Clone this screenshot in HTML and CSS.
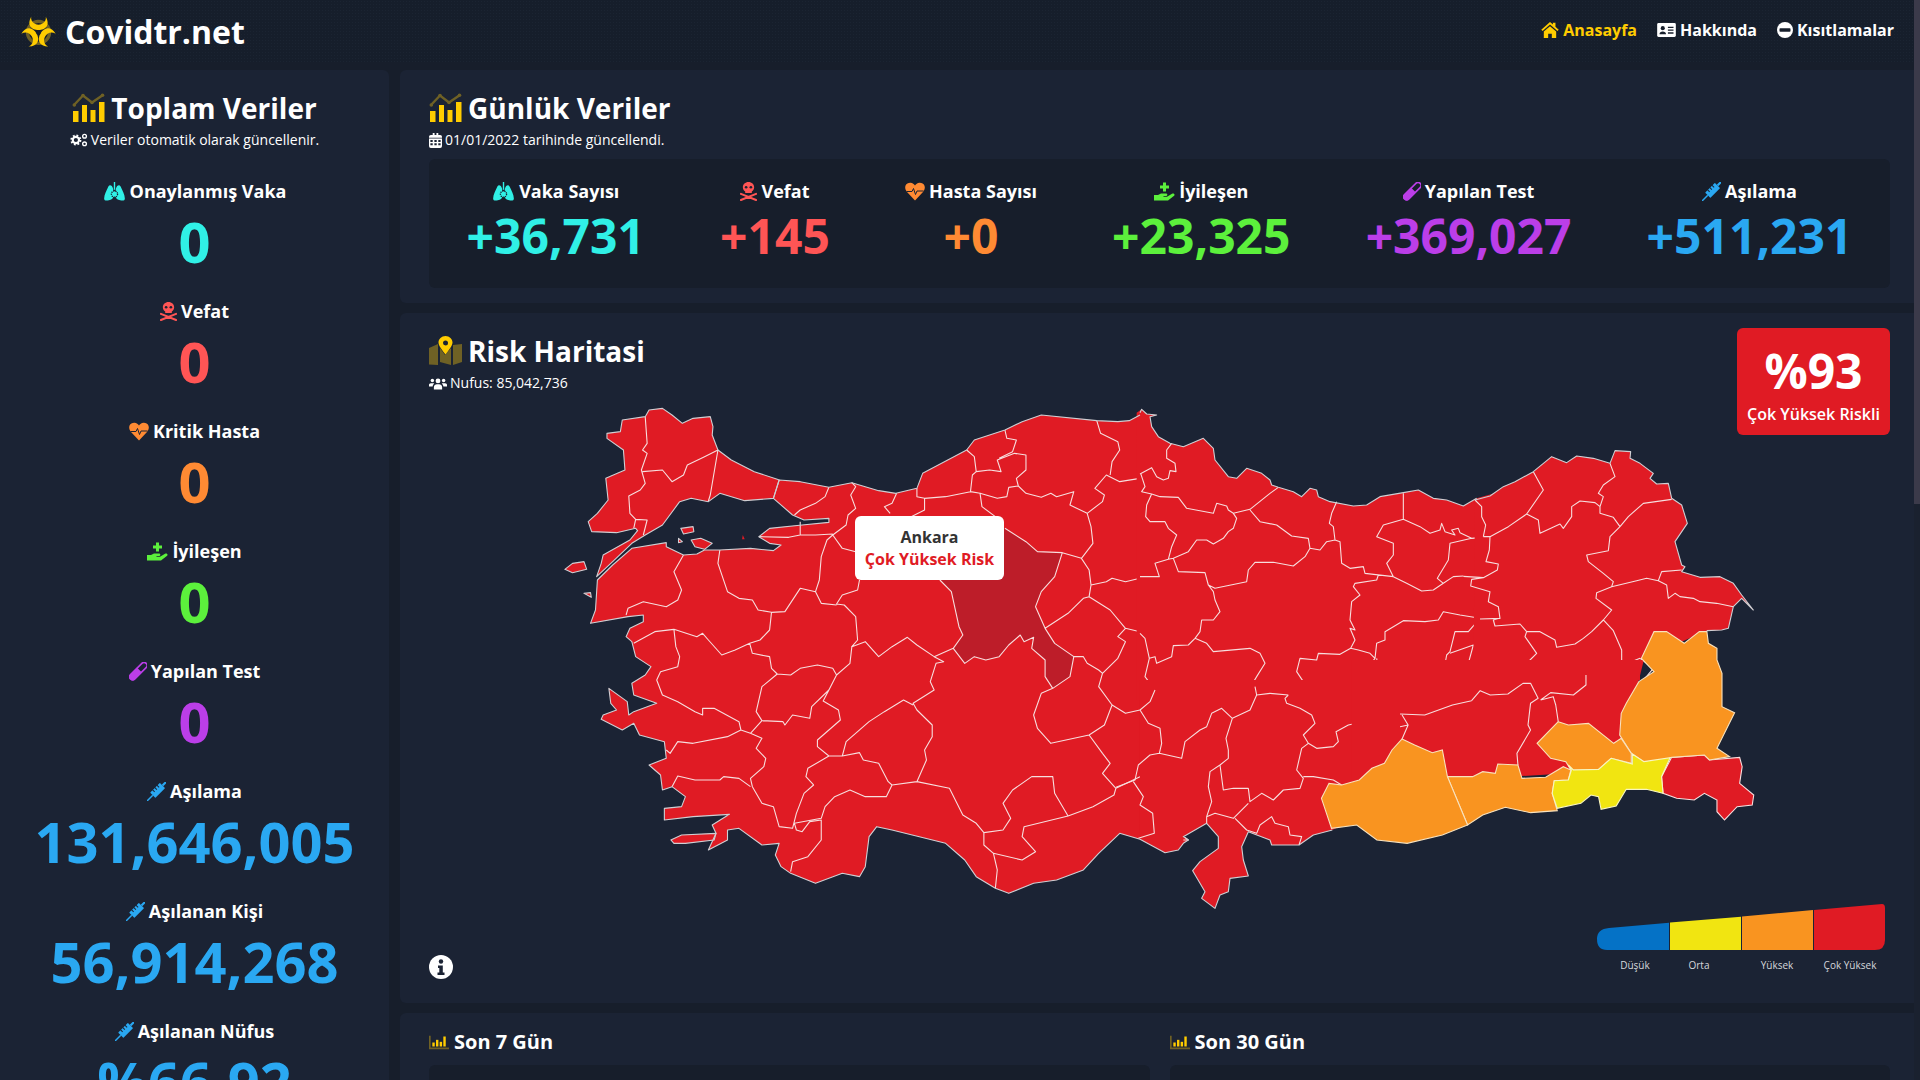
FILE: index.html
```html
<!DOCTYPE html>
<html lang="tr">
<head>
    <meta charset="UTF-8">
    <meta name="viewport" content="width=device-width, initial-scale=1.0">
    <title>Covidtr.net</title>
    <link rel="stylesheet" href="styles.css">
</head>
<body>
    <svg class="icon-defs" aria-hidden="true">
        <symbol id="i-chart" viewBox="0 0 32 29">
            <polyline points="1.5,12 10.5,2.5 19.5,9.5 30.5,2" fill="none" stroke="#6f6125" stroke-width="2.4"/>
            <circle cx="1.8" cy="12" r="1.8" fill="#6f6125"/><circle cx="10.5" cy="2.5" r="1.8" fill="#6f6125"/><circle cx="19.5" cy="9.5" r="1.8" fill="#6f6125"/><circle cx="30" cy="2.2" r="1.8" fill="#6f6125"/>
            <rect x="0.5" y="18" width="5.5" height="11" fill="#ffcc00"/><rect x="9.5" y="12" width="5" height="17" fill="#ffcc00"/><rect x="18" y="17" width="5" height="12" fill="#ffcc00"/><rect x="26.5" y="9" width="5.5" height="20" fill="#ffcc00"/>
        </symbol>
        <symbol id="i-bars" viewBox="0 0 30 20">
            <path d="M0 0h2.5v17.5H30V20H0z" fill="#6f6125"/>
            <rect x="5" y="10" width="3.6" height="6" fill="#ffcc00"/><rect x="10.5" y="6" width="3.6" height="10" fill="#ffcc00"/><rect x="16" y="9" width="3.6" height="7" fill="#ffcc00"/><rect x="21.5" y="1" width="3.6" height="15" fill="#ffcc00"/>
        </symbol>
        <symbol id="i-map" viewBox="0 0 33 29">
            <path d="M0 12l9-4v21l-9 -0.5zM11 12l5 7 6-7v17l-11-3zM24 9l9 -1v18l-9 3z" fill="#6f6125"/>
            <path d="M16.5 0c-4 0-7 3-7 6.5 0 3.500 4 8 7 12 3-4 7-8.500 7-12 0-3.500-3-6.500-7-6.500zm0 4.500a2.500 2.500 0 1 1 0 5 2.500 2.500 0 0 1 0-5z" fill="#ffcc00" fill-rule="evenodd"/>
        </symbol>
        <symbol id="i-bio" viewBox="-20 -18 40 36">
            <circle cx="0" cy="1" r="12" fill="none" stroke="#6f6125" stroke-width="3.600"/>
            <g fill="#ffcc00">
                <path d="M-8-17C-13-8-8-2.500 0-2.500 8-2.500 13-8 8-17 8.500-12 5-8.500 0-8.500-5-8.500-8.500-12-8-17z" transform="translate(0 1)"/>
                <path d="M-8-17C-13-8-8-2.500 0-2.500 8-2.500 13-8 8-17 8.500-12 5-8.500 0-8.500-5-8.500-8.500-12-8-17z" transform="translate(0 1) rotate(120)"/>
                <path d="M-8-17C-13-8-8-2.500 0-2.500 8-2.500 13-8 8-17 8.500-12 5-8.500 0-8.500-5-8.500-8.500-12-8-17z" transform="translate(0 1) rotate(240)"/>
            </g>
            <circle cx="0" cy="1" r="2.600" fill="#161e2b"/>
        </symbol>
        <symbol id="i-gears" viewBox="0 0 26 20">
            <circle cx="8.500" cy="10" r="6.500" fill="none" stroke="currentColor" stroke-width="3" stroke-dasharray="2.600 2.500"/>
            <circle cx="8.500" cy="10" r="4.500" fill="none" stroke="currentColor" stroke-width="3"/>
            <circle cx="21" cy="4.500" r="2.700" fill="none" stroke="currentColor" stroke-width="2"/>
            <circle cx="21" cy="15.500" r="2.700" fill="none" stroke="currentColor" stroke-width="2"/>
        </symbol>
        <symbol id="i-cal" viewBox="0 0 14 16">
            <path d="M2 2h2V0h2v2h2V0h2v2h2a2 2 0 0 1 2 2v10a2 2 0 0 1-2 2H2a2 2 0 0 1-2-2V4a2 2 0 0 1 2-2z" fill="currentColor"/>
            <path d="M0 5h14v.8H0zM1.500 7.500h2.500v2H1.500zM5.800 7.500h2.500v2H5.800zM10 7.500h2.500v2H10zM1.500 11h2.500v2H1.500zM5.800 11h2.500v2H5.800zM10 11h2.500v2H10z" fill="#1b2334"/>
        </symbol>
        <symbol id="i-users" viewBox="0 0 24 16">
            <circle cx="12" cy="4.500" r="3.200" fill="currentColor"/><circle cx="4.500" cy="4" r="2.300" fill="currentColor"/><circle cx="19.500" cy="4" r="2.300" fill="currentColor"/>
            <path d="M6.500 16v-3c0-2.500 2-4 4-4h3c2 0 4 1.500 4 4v3zM0 10c0-1.500 1-2.500 2.500-2.500h3c.6 0 1 .2 1.500.5-1.200 1-2 2.500-2.200 4H0zM24 10c0-1.500-1-2.500-2.500-2.500h-3c-.6 0-1 .2-1.500.5 1.200 1 2 2.500 2.200 4H24z" fill="currentColor"/>
        </symbol>
        <symbol id="i-lungs" viewBox="0 0 24 22">
            <path d="M10.500 8C9 3 6 3 4.800 5.500 3 9.500 0 15 0 19c0 2.500 2.500 3 5.500 2 3-.8 5-1.500 5-4zM13.500 8C15 3 18 3 19.200 5.500 21 9.500 24 15 24 19c0 2.500-2.500 3-5.500 2-3-.8-5-1.500-5-4z" fill="currentColor"/>
            <rect x="11.200" y="0" width="1.600" height="9" fill="currentColor"/>
            <circle cx="12" cy="14" r="3.600" fill="currentColor" stroke="#1b2334" stroke-width="1.500" stroke-dasharray="1.500 1"/>
        </symbol>
        <symbol id="i-skull" viewBox="0 0 18 20">
            <path d="M9 0c-3.500 0-6 2.500-6 5.500 0 2 1 3.500 2.500 4.500v1.500h7V10c1.500-1 2.500-2.500 2.500-4.500C15 2.500 12.500 0 9 0z" fill="currentColor"/>
            <circle cx="6.500" cy="5.500" r="1.400" fill="#1b2334"/><circle cx="11.500" cy="5.500" r="1.400" fill="#1b2334"/>
            <path d="M1 12.500l16 6.500M17 12.500L1 19" stroke="currentColor" stroke-width="2.200" stroke-linecap="round"/>
        </symbol>
        <symbol id="i-heart" viewBox="0 0 20 18">
            <path d="M10 18L2 9.500C-1 6-0.500 0.500 5 0.200 7.500 0 9 1.500 10 3c1-1.500 2.500-3 5-2.800 5.500.3 6 5.800 3 9.300z" fill="currentColor"/>
            <polyline points="1.500,9 7,9 8.500,6 10.500,12 12,8.500 18.500,8.500" fill="none" stroke="#1b2334" stroke-width="1"/>
        </symbol>
        <symbol id="i-hand" viewBox="0 0 21 18">
            <path d="M9 0h3v3h3v3h-3v3H9V6H6V3h3z" fill="currentColor"/>
            <path d="M0 12.500h4L7 11h5c1.800 0 1.800 2.500 0 2.500H9.500v.7H13l5-3c2-1 3.500 1 1.800 2.300L14 18H0z" fill="currentColor"/>
        </symbol>
        <symbol id="i-vial" viewBox="0 0 18 18">
            <g transform="rotate(45 9 9)">
                <rect x="6" y="-2.500" width="6" height="22" rx="3" fill="none" stroke="currentColor" stroke-width="1.600"/>
                <path d="M5.500 7h7v9.500a3.500 3.500 0 0 1-7 0z" fill="currentColor"/>
            </g>
        </symbol>
        <symbol id="i-syringe" viewBox="0 0 18 18">
            <g transform="rotate(45 9 9)" fill="currentColor">
                <rect x="5.500" y="1" width="7" height="13" rx="0.500"/>
                <rect x="8.300" y="14" width="1.400" height="8"/>
                <rect x="8" y="-4" width="2" height="5"/>
                <rect x="5.500" y="-4.500" width="7" height="1.600"/>
                <path d="M5 4h3v1H5zM5 7h3v1H5zM5 10h3v1H5z" fill="#1b2334"/>
            </g>
        </symbol>
    </svg>

    <div class="page">
        <div class="content">
            <header class="navbar">
                <a class="brand">
                    <svg class="bio-icon"><use href="#i-bio"/></svg>
                    <span>Covidtr.net</span>
                </a>
                <nav class="nav-links">
                    <a class="nav-link active">
                        <svg class="nav-icon-home" viewBox="0 0 24 22"><path fill="currentColor" d="M12 0L0 10.500l1.800 2L12 3.600l10.200 8.900 1.800-2L19.500 6.500V1h-3.500v2.500zM3.500 13L12 5.800l8.500 7.200V22H14.500v-6h-5v6h-6z"/></svg>
                        Anasayfa
                    </a>
                    <a class="nav-link">
                        <svg class="nav-icon-id" viewBox="0 0 20 15"><rect width="20" height="15" rx="1.500" fill="currentColor"/><circle cx="6" cy="5.500" r="2.200" fill="#161e2b"/><path d="M2.500 12c0-2 1.500-3 3.500-3s3.500 1 3.500 3zM11.500 4h6v1.400h-6zM11.500 7h6v1.400h-6zM11.500 10h6v1.400h-6z" fill="#161e2b"/></svg>
                        Hakkında
                    </a>
                    <a class="nav-link">
                        <svg class="nav-icon-ban" viewBox="0 0 16 16"><circle cx="8" cy="8" r="8" fill="currentColor"/><rect x="2.500" y="6.200" width="11" height="3.600" rx="0.800" fill="#161e2b"/></svg>
                        Kısıtlamalar
                    </a>
                </nav>
            </header>

            <div class="layout">
                <aside class="sidebar">
                    <h2 class="card-title center"><svg class="title-icon"><use href="#i-chart"/></svg>Toplam Veriler</h2>
                    <p class="card-sub center"><svg class="sub-icon-gears"><use href="#i-gears"/></svg>Veriler otomatik olarak güncellenir.</p>

                    <div class="totals">
                        <div class="total">
                            <div class="stat-label"><svg class="w-lungs c-cyan"><use href="#i-lungs"/></svg>Onaylanmış Vaka</div>
                            <div class="total-num c-cyan">0</div>
                        </div>
                        <div class="total">
                            <div class="stat-label"><svg class="w-skull c-red"><use href="#i-skull"/></svg>Vefat</div>
                            <div class="total-num c-red">0</div>
                        </div>
                        <div class="total">
                            <div class="stat-label"><svg class="w-heart c-orange"><use href="#i-heart"/></svg>Kritik Hasta</div>
                            <div class="total-num c-orange">0</div>
                        </div>
                        <div class="total">
                            <div class="stat-label"><svg class="w-hand c-green"><use href="#i-hand"/></svg>İyileşen</div>
                            <div class="total-num c-green">0</div>
                        </div>
                        <div class="total">
                            <div class="stat-label"><svg class="w-vial c-purple"><use href="#i-vial"/></svg>Yapılan Test</div>
                            <div class="total-num c-purple">0</div>
                        </div>
                        <div class="total">
                            <div class="stat-label"><svg class="w-syringe c-blue"><use href="#i-syringe"/></svg>Aşılama</div>
                            <div class="total-num c-blue">131,646,005</div>
                        </div>
                        <div class="total">
                            <div class="stat-label"><svg class="w-syringe c-blue"><use href="#i-syringe"/></svg>Aşılanan Kişi</div>
                            <div class="total-num c-blue">56,914,268</div>
                        </div>
                        <div class="total">
                            <div class="stat-label"><svg class="w-syringe c-blue"><use href="#i-syringe"/></svg>Aşılanan Nüfus</div>
                            <div class="total-num c-blue">%66,92</div>
                        </div>
                    </div>
                </aside>

                <main class="main">
                    <section class="card daily-card">
                        <h2 class="card-title"><svg class="title-icon"><use href="#i-chart"/></svg>Günlük Veriler</h2>
                        <p class="card-sub"><svg class="sub-icon-cal"><use href="#i-cal"/></svg>01/01/2022 tarihinde güncellendi.</p>
                        <div class="daily-panel">
                            <div class="daily">
                                <div class="stat-label"><svg class="w-lungs c-cyan"><use href="#i-lungs"/></svg>Vaka Sayısı</div>
                                <div class="daily-num c-cyan">+36,731</div>
                            </div>
                            <div class="daily">
                                <div class="stat-label"><svg class="w-skull c-red"><use href="#i-skull"/></svg>Vefat</div>
                                <div class="daily-num c-red">+145</div>
                            </div>
                            <div class="daily">
                                <div class="stat-label"><svg class="w-heart c-orange"><use href="#i-heart"/></svg>Hasta Sayısı</div>
                                <div class="daily-num c-orange">+0</div>
                            </div>
                            <div class="daily">
                                <div class="stat-label"><svg class="w-hand c-green"><use href="#i-hand"/></svg>İyileşen</div>
                                <div class="daily-num c-green">+23,325</div>
                            </div>
                            <div class="daily">
                                <div class="stat-label"><svg class="w-vial c-purple"><use href="#i-vial"/></svg>Yapılan Test</div>
                                <div class="daily-num c-purple">+369,027</div>
                            </div>
                            <div class="daily">
                                <div class="stat-label"><svg class="w-syringe c-blue"><use href="#i-syringe"/></svg>Aşılama</div>
                                <div class="daily-num c-blue">+511,231</div>
                            </div>
                        </div>
                    </section>

                    <section class="card map-card">
                        <h2 class="card-title"><svg class="title-icon"><use href="#i-map"/></svg>Risk Haritasi</h2>
                        <p class="card-sub"><svg class="sub-icon-users"><use href="#i-users"/></svg>Nufus: 85,042,736</p>

                        <div class="risk-badge">
                            <div class="risk-num">%93</div>
                            <div class="risk-text">Çok Yüksek Riskli</div>
                        </div>

                        <svg class="map" viewBox="540 400 1260 540" width="1260" height="540">
                            <!-- west, traced at 0.383 x 0.333 -->
                            <g transform="translate(540 400) scale(.38265 .33333)">
                                <path class="land" d="M1568 45 1540 62 1510 65 1455 62 1310 45 1260 65 1215 90 1135 120 1115 150 1000 220 985 265 930 280 885 272 815 248 755 262 680 245 625 240 610 295 660 345 690 360 755 355 755 367 685 375 600 385 572 410 600 430 630 435 610 452 550 445 470 450 430 450 410 462 375 465 330 440 330 428 240 445 190 495 150 540 145 630 132 670 230 650 270 645 270 665 235 685 225 710 240 725 250 770 290 800 275 825 240 850 245 885 305 910 245 935 232 945 228 905 180 865 185 910 200 930 165 945 160 958 215 990 245 970 260 1005 325 1025 330 1075 285 1095 315 1125 320 1170 345 1160 380 1190 370 1220 325 1225 325 1260 400 1250 495 1243 450 1275 460 1300 440 1350 490 1320 490 1290 520 1285 580 1335 625 1330 615 1365 630 1400 655 1420 720 1450 790 1420 835 1430 850 1400 860 1310 880 1280 920 1290 1060 1330 1110 1380 1140 1430 1190 1465 1225 1480 1290 1450 1350 1440 1420 1410 1460 1360 1515 1300 1568 1318"/>
                                <path class="land" d="M175 100 210 95 215 60 275 50 285 30 320 25 345 45 372 70 400 55 445 50 452 80 450 105 465 150 500 180 560 215 620 238 625 240 610 295 535 302 470 280 440 305 395 295 365 305 320 375 275 405 240 430 185 490 148 530 160 490 165 465 235 420 255 392 250 385 200 398 135 395 126 365 150 340 178 300 172 235 222 210 218 150 175 115Z"/>
                                <path class="land" d="M65 508 85 490 115 485 122 508 85 518ZM115 580 132 578 134 592ZM368 385 400 380 402 395 375 402ZM362 415 372 425 362 428ZM395 420 420 415 450 430 430 448 405 440ZM342 1320 370 1305 460 1300 455 1320 380 1330 350 1330ZM530 405 535 418 528 418Z"/>
                                <path class="hover" d="M1215 385 1270 425 1300 455 1365 458 1345 530 1310 575 1295 620 1320 685 1345 730 1395 770 1385 830 1340 865 1320 830 1320 780 1285 745 1290 712 1265 725 1255 705 1225 735 1200 770 1165 780 1135 770 1110 790 1080 745 1105 705 1095 680 1075 575 1045 540 1000 540 1000 385Z"/>
                                <path class="border" d="M275 50 280 130 268 150 280 160 265 210 275 250 262 270 232 288 235 340 250 358 280 360 270 405M268 215 320 210 345 245 375 225 385 195 430 170 465 150 445 285 440 303M250 358 245 385M755 262 745 290 720 310 680 330 665 345M815 248 825 260 812 285 825 325 805 345 800 375 765 405M680 365 680 405M572 410 650 412 680 405 720 405 765 402M932 280 920 310 900 320 915 340M985 265 985 290 1005 295 1005 330 970 350M1005 295 1060 290 1125 275 1150 280 1155 320 1190 350M1150 280 1195 295 1220 290 1225 262 1250 258 1270 280 1310 292 1335 280 1350 290 1395 275 1385 315 1430 340 1470 305 1475 285 1450 265 1480 225 1515 245 1568 235M1125 275 1130 225 1140 215 1175 210 1205 215 1195 180 1240 160 1270 165 1270 210 1245 235 1250 258M1115 150 1135 170 1140 215M1215 90 1220 115 1245 120 1235 155 1200 175M1455 62 1465 100 1510 125 1515 150 1495 185 1490 225M1430 340 1440 380 1445 430 1415 475 1365 458 1300 455 1270 425 1215 385M1365 458 1345 530 1310 575 1295 620 1320 685 1345 730 1395 770 1385 830 1340 865M1415 475 1435 510 1440 555 1480 545 1495 535 1530 545 1568 535M1440 555 1435 590 1420 595 1380 640 1320 685M1435 590 1490 630 1530 685 1568 695M1530 685 1510 710 1530 725 1510 775 1470 820 1460 810 1430 790 1420 770 1395 770M1470 820 1460 860 1495 915 1475 975 1435 1005 1335 1030 1300 985 1290 945 1310 880 1340 865M1495 915 1530 940 1568 930M1435 1005 1470 1060 1490 1090 1470 1120 1505 1165 1568 1130M1505 1165 1500 1185 1445 1220 1380 1248 1345 1180 1340 1130 1285 1130 1235 1170 1210 1210 1230 1255 1210 1290 1160 1298 1140 1270 1105 1245 1070 1165 985 1145 1010 1080 1005 1050 1025 1010 1025 975 985 930 975 910 1030 870 1020 845 1035 790 1055 785 1030 770 1080 745M1160 1298 1160 1335 1185 1360 1260 1380 1295 1355 1260 1310 1265 1280 1380 1248M1185 1360 1195 1410 1190 1465M1045 540 1075 575 1095 680 1105 705 1080 745 1110 790 1135 770 1165 780 1200 770 1225 735 1255 705 1265 725 1290 712 1285 745 1320 780 1320 830 1340 865M1080 745 1030 770 985 735 960 712 920 740 885 770 850 725 815 740 830 720 825 650 795 615 775 612 790 585 830 570 835 540M775 615 735 610 720 575 680 565 640 635 605 637 570 630 555 600 520 595 490 575 465 490 470 450M720 575 730 540 735 470 750 420 765 405 790 445 825 455M375 465 350 515 370 570 360 600 330 620 270 605 230 625 225 645M605 637 600 690 575 720 548 730 510 750 475 765 440 720 425 700 410 710 350 688 300 695 245 730M350 688 355 740 365 770 360 800 315 815 305 840 320 885 360 905 405 935 425 945 425 925 455 925 520 965 525 990M548 730 555 760 600 770 605 805 620 822 655 825 680 805 725 795 765 805 775 825M815 740 810 790 775 825 755 870 710 920 705 955 660 945 640 975 635 965 580 962 565 935 580 860 620 822M580 962 550 1000 525 990 490 1010 400 1030 360 1025 340 1060 330 1050M550 1000 580 1015 565 1045 590 1075 585 1100 550 1135 555 1160 580 1210 610 1220 625 1280 660 1285 670 1240 690 1180 715 1155 695 1130 700 1105 755 1068 725 1040 725 1020 785 960 780 930 740 903 755 870M755 1068 790 1068 835 1058 845 1080 885 1090 910 1145 920 1155 905 1190 850 1190 810 1170 770 1190 745 1220 735 1255 665 1270 670 1290 685 1295 705 1265 735 1260 735 1320 700 1370 660 1385 655 1415M790 1068 800 1025 860 965 900 935 950 900 975 915M920 1155 985 1145M550 1160 520 1135 480 1130 470 1140 405 1140 360 1128 345 1160"/>
                            </g>

                            <!-- north middle, traced at 0.333 -->
                            <g transform="translate(1100 400) scale(.33333)">
                                <path class="land" d="M110 38 125 28 140 42 170 45 150 50 155 80 175 110 210 130 250 140 310 115 340 145 345 180 385 230 410 235 440 205 485 220 510 240 515 255 535 262 580 275 605 290 630 265 650 270 655 290 690 305 760 318 800 315 840 290 910 278 955 270 1000 295 1040 300 1090 318 1130 295 1200 275 1200 900 110 900Z"/>
                                <path class="border" d="M120 222 155 203 170 230 190 240 205 235 210 212 228 215 225 190 200 175 200 150 215 130M122 220 135 260 125 275 155 282 180 290 235 292 260 325 340 340 350 310 380 318 385 330 400 340 450 328 510 280 535 262M155 282 140 315 137 350 150 365 195 365 205 385 230 405 215 440 205 478 165 490 178 530 120 530M205 478 220 475 235 515 315 518 325 555 345 565 440 545 445 510 465 487 520 487 580 498 615 470 630 445 660 450 680 425 705 420 720 425 725 490 750 505 790 500 795 520 880 530 920 550 965 573 1000 570 1030 550 1060 530 1090 528M220 475 265 455 290 420 320 420 340 432 370 415 385 395 400 385 410 355 400 340M450 330 480 365 530 375 575 408 625 415 630 445M705 420 700 380 688 370 695 340 710 305M880 530 860 490 880 465 880 430 830 410 850 375 910 358 910 280M910 358 960 380 990 400 1020 390 1025 370 1035 395 1065 405 1055 390 1075 385 1080 398 1115 415 1170 410M1115 415 1050 430 1045 480 1012 535 1030 550M325 555 340 575 345 600 360 635 340 660 305 660 300 695 285 715 265 735 220 737 215 770 170 790 165 770 148 775 135 715 120 700M148 775 135 830 165 870M285 715 320 730 340 755 450 745 480 760 495 790 470 830 455 855 465 880M565 885 580 855 610 845 590 815 600 775 650 780 655 760 720 763 752 745 765 720 750 685 765 690 750 660 755 605 780 585 760 560 765 550 830 540 835 525M752 745 775 750 810 760 825 775 805 800 808 840 775 845 760 880M825 775 830 730 855 720 855 695 910 662 975 665 1015 660 1030 635 1080 645 1140 655M1140 655 1105 695 1065 695 1050 755 1040 765 1030 820 975 830 930 820 900 808 850 805 835 810 830 775M1050 760 1120 735 1105 790 1130 830 1090 860 1110 900"/>
                            </g>

                            <!-- north east, traced at 0.333 -->
                            <g transform="translate(1440 420) scale(.33333)">
                                <path class="land" d="M105 240 150 228 190 200 225 185 280 155 335 110 380 128 410 108 460 115 510 130 525 92 572 95 570 115 600 130 640 160 630 175 650 192 685 190 695 235 725 255 742 310 705 365 725 435 735 440 725 455 780 472 840 470 880 490 905 525 940 570 905 535 880 560 865 625 845 630 800 632 600 720 600 780 100 780Z"/>
                                <path class="border" d="M105 240 125 260 125 290 137 315 130 350M130 350 150 350 205 320 260 282 310 210 280 155M260 282 295 300 300 340 360 312 370 325 395 290 395 260 420 243 465 248 480 260 490 230 475 220 490 195 525 170 510 130M480 260 480 280 520 292 540 320 565 290 610 250 695 238M540 320 510 350 505 392 440 405 445 425 490 460 520 485 515 500M150 350 148 390 138 425 175 432 172 450 130 473 70 469M130 473 95 478 92 498 150 515 145 545 175 560 180 595 120 597M515 500 470 518 468 535 515 570 490 600 455 635 430 655 405 672 350 682 345 660 300 635 260 635 240 612 165 618 160 600 180 595M260 635 255 650 290 700 255 735 255 780M515 500 590 482 620 475 655 482 680 495 685 535 705 520 720 530 760 535 780 545 830 550 880 560M655 482 665 455 725 450M490 600 520 632 545 690 545 735M545 737 470 735 445 748 435 780M545 737 600 715 640 745 615 775"/>
                            </g>

                            <!-- south middle, traced at 0.333 -->
                            <g transform="translate(1100 680) scale(.33333)">
                                <path class="land" d="M120 478 195 518 235 510 250 490 265 480 250 470 320 430 355 470 355 505 300 545 278 572 315 635 305 655 345 685 360 645 385 635 390 595 445 588 430 540 425 500 445 455 510 480 515 495 597 495 640 465 697 450 735 432 900 140 900 0 120 0Z"/>
                                <path class="border" d="M120 90 145 130 180 145 185 190 178 220 245 235 255 185 300 150 320 140 335 100 365 85 397 115 450 90 470 45 465 20M470 45 510 40 565 45M565 45 555 55 560 70 600 85 635 105 645 130 610 165 625 190 605 205 590 270 610 295 600 325 550 330 520 360 485 340 450 365 445 325 400 325 370 330 360 255M397 115 378 175 385 210 385 235 360 255 330 275 325 320 335 365 320 410 345 400 400 415 445 370M610 290 640 290 700 300 725 315M625 190 650 205 700 200 715 185 708 155 745 135 770 130 840 170 875 160 900 140M760 40 770 60 840 80 850 75 875 100 900 95M405 415 440 450 470 460 480 435 515 410 525 430 565 440 570 465 605 470 597 495M178 220 150 225 115 255 105 300 48 322M100 305 130 350 120 375 158 400 163 460 115 475M165 30 150 65 120 90M320 430 320 410M250 480 265 480 255 472"/>
                            </g>

                            <!-- south east, traced at 0.504 x 0.333 -->
                            <g transform="translate(1130 560) scale(.50383 .33333)">
                                <path class="land" d="M440 300 1020 300 1000 420 975 540 870 640 640 660 440 660Z"/>
                                <path class="land bordered" d="M1075 592 1140 585 1150 600 1210 592 1215 620 1210 670 1238 705 1235 735 1205 740 1180 780 1165 755 1165 720 1140 700 1120 720 1085 715 1058 700 1055 650Z"/>
                                <path class="border" d="M536 462 585 465 640 435 678 422M536 500 552 495 540 465M552 495 540 537M678 422 695 392 715 405 750 402 780 370 795 370 810 415 795 430 790 495 795 510 768 580 770 615M815 420 840 410 845 435 850 485M815 420 835 398 880 405 905 375 905 345"/>
                                <path class="high" d="M1040 215 1065 215 1100 250 1130 215 1145 215 1148 250 1165 265 1165 300 1175 340 1175 440 1200 458 1165 565 1190 590 1150 600 1140 585 1075 592 1055 605 1020 605 995 580 972 525 975 460 985 430 1010 365 1040 335 1015 295Z"/>
                                <path class="high" d="M850 485 870 495 910 490 960 550 975 535 995 580 995 610 955 595 930 628 875 630 865 605 835 595 808 550Z"/>
                                <path class="high" d="M630 650 680 650 700 635 725 640 730 612 770 615 778 655 825 652 860 620 875 630 870 660 842 662 838 700 848 752 795 758 745 742 700 765 670 795Z"/>
                                <path class="high" d="M540 537 565 555 600 578 620 570 630 650 670 795 620 825 550 850 490 840 450 795 400 805 380 715 395 670 420 675 455 660 480 625 505 610 520 570Z"/>
                                <path class="mid" d="M870 615 880 630 930 628 955 595 997 612 997 582 1020 605 1072 593 1055 650 1058 700 1025 688 985 688 965 738 935 748 930 710 915 705 895 730 848 745 838 700 842 662 870 660 876 630Z"/>
                            </g>

                            <!-- coast, drawn last so it sits on the fills -->
                            <g transform="translate(1100 400) scale(.33333)">
                                <path class="coast" d="M120 38 125 28 140 42 170 45 150 50 155 80 175 110 210 130 250 140 310 115 340 145 345 180 385 230 410 235 440 205 485 220 510 240 515 255 535 262 580 275 605 290 630 265 650 270 655 290 690 305 760 318 800 315 840 290 910 278 955 270 1000 295 1040 300 1090 318 1130 295"/>
                            </g>
                            <g transform="translate(1440 420) scale(.33333)">
                                <path class="coast" d="M105 240 150 228 190 200 225 185 280 155 335 110 380 128 410 108 460 115 510 130 525 92 572 95 570 115 600 130 640 160 630 175 650 192 685 190 695 235 725 255 742 310 705 365 725 435 735 440 725 455 780 472 840 470 880 490 905 525 940 570 905 535 880 560 865 625 845 630 800 632"/>
                            </g>
                            <g transform="translate(1100 680) scale(.33333)">
                                <path class="coast" d="M120 478 195 518 235 510 250 490 265 480 250 470 320 430 355 470 355 505 300 545 278 572 315 635 305 655 345 685 360 645 385 635 390 595 445 588 430 540 425 500 445 455 510 480 515 495 597 495 640 465 697 450"/>
                            </g>
                            <g transform="translate(540 400) scale(.38265 .33333)">
                                <path class="coast" d="M1568 45 1540 62 1510 65 1455 62 1310 45 1260 65 1215 90 1135 120 1115 150 1000 220 985 265 930 280 885 272 815 248 755 262 680 245 625 240 610 295 660 345 690 360 755 355 755 367 685 375 600 385 572 410 600 430 630 435 610 452 550 445 470 450 430 450 410 462 375 465 330 440 330 428 240 445 190 495 150 540 145 630 132 670 230 650 270 645 270 665 235 685 225 710 240 725 250 770 290 800 275 825 240 850 245 885 305 910 245 935 232 945 228 905 180 865 185 910 200 930 165 945 160 958 215 990 245 970 260 1005 325 1025 330 1075 285 1095 315 1125 320 1170 345 1160 380 1190 370 1220 325 1225 325 1260 400 1250 495 1243 450 1275 460 1300 440 1350 490 1320 490 1290 520 1285 580 1335 625 1330 615 1365 630 1400 655 1420 720 1450 790 1420 835 1430 850 1400 860 1310 880 1280 920 1290 1060 1330 1110 1380 1140 1430 1190 1465 1225 1480 1290 1450 1350 1440 1420 1410 1460 1360 1515 1300 1568 1318"/>
                                <path class="coast" d="M175 100 210 95 215 60 275 50 285 30 320 25 345 45 372 70 400 55 445 50 452 80 450 105 465 150 500 180 560 215 620 238 625 240 610 295 535 302 470 280 440 305 395 295 365 305 320 375 275 405 240 430 185 490 148 530 160 490 165 465 235 420 255 392 250 385 200 398 135 395 126 365 150 340 178 300 172 235 222 210 218 150 175 115Z"/>
                                <path class="coast" d="M65 508 85 490 115 485 122 508 85 518ZM115 580 132 578 134 592ZM368 385 400 380 402 395 375 402ZM362 415 372 425 362 428ZM395 420 420 415 450 430 430 448 405 440ZM342 1320 370 1305 460 1300 455 1320 380 1330 350 1330Z"/>
                            </g>
                        </svg>

                        <div class="map-tip">
                            <div class="tip-name">Ankara</div>
                            <div class="tip-risk">Çok Yüksek Risk</div>
                        </div>

                        <svg class="info-btn" viewBox="0 0 24 24"><circle cx="12" cy="12" r="12" fill="#fff"/><circle cx="12" cy="6.500" r="2.200" fill="#1b2334"/><path d="M9 10.500h4.800v7H15.500v2.500H8.500v-2.500h1.800v-4.500H9z" fill="#1b2334"/></svg>

                        <div class="legend">
                            <svg class="legend-bar" viewBox="0 0 288 46">
                                <path d="M72 18.700 12 24Q0 25 0 35 0 46 10 46H72Z" fill="#0572c6"/>
                                <path d="M73 18.600 144 12.700V46H73Z" fill="#f1e511"/>
                                <path d="M145 12.600 216 6.100V46H145Z" fill="#f99420"/>
                                <path d="M217 6 285 0Q288 0 288 4V36Q288 46 278 46H217Z" fill="#e01b24"/>
                            </svg>
                            <div class="legend-labels">
                                <span>Düşük</span>
                                <span>Orta</span>
                                <span>Yüksek</span>
                                <span>Çok Yüksek</span>
                            </div>
                        </div>
                    </section>

                    <section class="card trend-card">
                        <div class="trend">
                            <h3 class="trend-title"><svg class="trend-icon"><use href="#i-bars"/></svg>Son 7 Gün</h3>
                            <div class="trend-panel"></div>
                        </div>
                        <div class="trend">
                            <h3 class="trend-title"><svg class="trend-icon"><use href="#i-bars"/></svg>Son 30 Gün</h3>
                            <div class="trend-panel"></div>
                        </div>
                    </section>
                </main>
            </div>
        </div>
        <div class="scrollbar"><div class="scroll-thumb"></div></div>
    </div>
</body>
</html>
```

FILE: styles.css
```css
html, body {
    height: 100%;
    margin: 0;
    overflow: hidden;
}
body {
    font-family: "Open Sans", "Liberation Sans", sans-serif;
    background-color: #171e2b;
    color: #fff;
}
h2, h3, p {
    margin: 0;
}
.icon-defs {
    position: absolute;
    width: 0;
    height: 0;
}
.page {
    display: flex;
    height: 1080px;
    overflow: hidden;
}
.content {
    flex: 1;
    min-width: 0;
}
.scrollbar {
    width: 6px;
    background-color: #1a212f;
}
.scroll-thumb {
    height: 504px;
    background-color: #3b3a4a;
}

/* navbar */
.navbar {
    display: flex;
    align-items: center;
    justify-content: space-between;
    height: 62px;
    margin-bottom: 8px;
    padding: 0 20px;
    background-color: #161e2b;
    background-image: radial-gradient(#1b2432 1px, transparent 1px);
    background-size: 3px 3px;
}
.brand {
    display: flex;
    align-items: center;
    gap: 8px;
    font-size: 32px;
    font-weight: 700;
}
.bio-icon {
    width: 37px;
    height: 33px;
}
.nav-links {
    display: flex;
    gap: 20px;
}
.nav-link {
    display: flex;
    align-items: center;
    gap: 4px;
    font-size: 16px;
    font-weight: 700;
    line-height: 22px;
    margin-top: -2px;
}
.nav-link.active {
    color: #ffcc00;
}
.nav-icon-home {
    width: 18px;
    height: 16px;
}
.nav-icon-id {
    width: 19px;
    height: 14px;
}
.nav-icon-ban {
    width: 16px;
    height: 16px;
}

/* layout */
.layout {
    display: flex;
    gap: 11px;
}
.sidebar {
    width: 389px;
    height: 1010px;
    flex-shrink: 0;
    padding-top: 20px;
    box-sizing: border-box;
    background-color: #1b2334;
    border-top-right-radius: 6px;
    overflow: hidden;
}
.main {
    flex: 1;
    min-width: 0;
    display: flex;
    flex-direction: column;
    gap: 10px;
}
.card {
    background-color: #1b2334;
    border-top-left-radius: 6px;
    border-bottom-left-radius: 6px;
    padding: 20px 24px 15px 29px;
}
.card-title {
    display: flex;
    align-items: center;
    gap: 6px;
    height: 36px;
    box-sizing: border-box;
    padding-bottom: 1px;
    font-size: 28px;
    font-weight: 700;
    line-height: 34px;
}
.card-sub {
    display: flex;
    align-items: center;
    gap: 3px;
    height: 20px;
    margin-top: 4px;
    font-size: 14px;
    font-weight: 500;
    line-height: 20px;
}
.center {
    justify-content: center;
}
.title-icon {
    width: 33px;
    height: 29px;
}
.sub-icon-gears {
    width: 18px;
    height: 14px;
}
.sub-icon-cal {
    width: 13px;
    height: 15px;
}
.sub-icon-users {
    width: 18px;
    height: 13px;
}

/* stats */
.stat-label {
    display: flex;
    align-items: center;
    justify-content: center;
    gap: 4px;
    height: 24px;
    font-size: 18px;
    font-weight: 700;
    line-height: 24px;
    white-space: nowrap;
}
.stat-label svg {
    height: 19px;
}
.w-lungs { width: 23px; }
.w-skull { width: 17px; }
.w-heart { width: 20px; }
.w-hand { width: 21px; }
.w-vial { width: 18px; }
.w-syringe { width: 19px; }

.c-cyan { color: #30f0e6; }
.c-red { color: #ff5555; }
.c-orange { color: #ff8a33; }
.c-green { color: #5cf03c; }
.c-purple { color: #bb3ee8; }
.c-blue { color: #2aa8f2; }

.totals {
    margin-top: 29px;
}
.total {
    height: 120px;
    text-align: center;
}
.total-num {
    font-size: 56px;
    font-weight: 700;
    line-height: 76px;
}
.daily-panel {
    display: flex;
    justify-content: space-around;
    margin-top: 9px;
    padding: 20px 0 19px;
    background-color: #171e2b;
    border-radius: 6px;
}
.daily {
    text-align: center;
}
.daily-num {
    font-size: 48px;
    font-weight: 700;
    line-height: 66px;
    white-space: nowrap;
}

/* map */
.map-card {
    position: relative;
    padding-bottom: 63px;
}
.map {
    display: block;
    margin: 7px 0 0 111px;
}
.land {
    fill: #e01b24;
    stroke: none;
}
.land.bordered {
    stroke: #f7dede;
    stroke-width: 1.100;
}
.hover {
    fill: #bd1d29;
}
.high {
    fill: #f99420;
    stroke: #f9e2bd;
    stroke-width: 1.100;
}
.mid {
    fill: #f1e511;
    stroke: #f9f6c0;
    stroke-width: 1.100;
}
.border, .coast {
    fill: none;
    stroke-width: 1.100;
    stroke-linejoin: round;
}
.border {
    stroke: #f7dede;
}
.coast {
    stroke: #cfcfd3;
}
.map path {
    vector-effect: non-scaling-stroke;
}
.map-tip {
    position: absolute;
    left: 455px;
    top: 203px;
    width: 149px;
    height: 64px;
    display: flex;
    flex-direction: column;
    justify-content: center;
    background-color: #fff;
    border-radius: 6px;
    text-align: center;
    font-size: 16px;
    font-weight: 700;
    line-height: 22px;
}
.tip-name {
    color: #333;
}
.tip-risk {
    color: #e01b24;
}
.risk-badge {
    position: absolute;
    top: 15px;
    right: 24px;
    width: 153px;
    height: 107px;
    background-color: #e01b24;
    border-radius: 6px;
    text-align: center;
}
.risk-num {
    margin-top: 11px;
    font-size: 48px;
    font-weight: 700;
    line-height: 64px;
}
.risk-text {
    font-size: 16px;
    font-weight: 600;
    line-height: 22px;
}
.info-btn {
    position: absolute;
    left: 29px;
    top: 642px;
    width: 24px;
    height: 24px;
}
.legend {
    position: absolute;
    top: 591px;
    left: 1197px;
    width: 288px;
}
.legend-bar {
    display: block;
    width: 288px;
    height: 46px;
}
.legend-labels {
    display: grid;
    grid-template-columns: 76px 52px 104px 42px;
    margin-top: 8px;
    font-size: 10px;
    line-height: 14px;
    color: #d6d8dc;
}
.legend-labels span {
    justify-self: center;
    white-space: nowrap;
}

/* trends */
.trend-card {
    display: grid;
    grid-template-columns: 1fr 1fr;
    gap: 20px;
    padding-top: 16px;
}
.trend-title {
    display: flex;
    align-items: center;
    gap: 5px;
    height: 26px;
    font-size: 20px;
    font-weight: 700;
    line-height: 26px;
}
.trend-icon {
    width: 20px;
    height: 15px;
}
.trend-panel {
    height: 300px;
    margin-top: 10px;
    background-color: #171e2b;
    border-radius: 6px;
}
```
